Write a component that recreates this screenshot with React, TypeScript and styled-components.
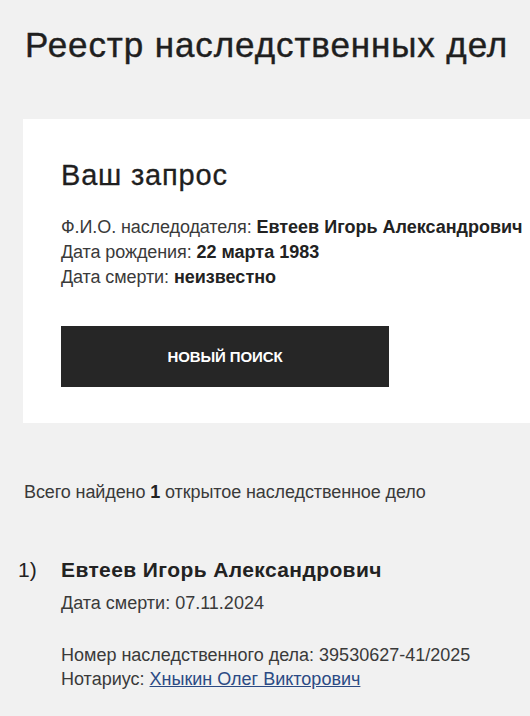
import React from "react";
import styled, { createGlobalStyle } from "styled-components";

const Global = createGlobalStyle`
  html, body {
    margin: 0;
    padding: 0;
    background: #f1f1f1;
    overflow: hidden;
  }
  body {
    font-family: "Liberation Sans", Arial, sans-serif;
    color: #222;
  }
`;

const Page = styled.div`
  width: 600px;
  padding: 23px 0 0 23px;
  box-sizing: border-box;
`;

const Title = styled.h1`
  margin: 0 0 0 2px;
  font-size: 35px;
  line-height: 44px;
  font-weight: 400;
  color: #1f1f1f;
  letter-spacing: 0.9px;
  -webkit-text-stroke: 0.4px #1f1f1f;
  white-space: nowrap;
`;

const Card = styled.section`
  margin-top: 52px;
  background: #fff;
  padding: 38px 38px 36px 38px;
  width: 560px;
  box-sizing: border-box;
`;

const CardTitle = styled.h2`
  margin: 0 0 22px 0;
  font-size: 29px;
  line-height: 36px;
  font-weight: 400;
  color: #1f1f1f;
  letter-spacing: 0.8px;
  -webkit-text-stroke: 0.3px #1f1f1f;
`;

const InfoLine = styled.div`
  font-size: 18px;
  line-height: 25px;
  color: #3a3a3a;
  white-space: nowrap;
  letter-spacing: -0.1px;
  b {
    font-weight: 700;
    color: #222;
    letter-spacing: 0;
  }
`;

const Button = styled.button`
  margin-top: 36px;
  width: 328px;
  height: 61px;
  background: #262626;
  border: none;
  color: #fff;
  font-family: "Liberation Sans", Arial, sans-serif;
  font-weight: 700;
  font-size: 15px;
  letter-spacing: -0.1px;
  cursor: pointer;
  display: block;
  padding: 0;
`;

const Summary = styled.p`
  margin: 58px 0 0 1px;
  font-size: 18px;
  line-height: 22px;
  color: #3a3a3a;
  white-space: nowrap;
  letter-spacing: -0.1px;
  b {
    color: #222;
  }
`;

const Case = styled.div`
  display: grid;
  grid-template-columns: 43px 1fr;
  margin: 54px 0 0 -5px;
`;

const Num = styled.div`
  font-size: 21px;
  line-height: 26px;
  color: #222;
`;

const CaseBody = styled.div`
  display: flex;
  flex-direction: column;
`;

const CaseName = styled.div`
  font-size: 21px;
  line-height: 26px;
  font-weight: 700;
  color: #222;
  letter-spacing: 0.4px;
  white-space: nowrap;
`;

const CaseLine = styled.div<{ $gap?: number }>`
  font-size: 18px;
  line-height: 24px;
  color: #3a3a3a;
  margin-top: ${(p) => p.$gap ?? 0}px;
  white-space: nowrap;
`;

const Link = styled.a`
  color: #2b4a84;
  text-decoration: underline;
`;

export default function App() {
  return (
    <>
      <Global />
      <Page>
        <Title>Реестр наследственных дел</Title>
        <Card>
          <CardTitle>Ваш запрос</CardTitle>
          <InfoLine>
            Ф.И.О. наследодателя: <b>Евтеев Игорь Александрович</b>
          </InfoLine>
          <InfoLine>
            Дата рождения: <b>22 марта 1983</b>
          </InfoLine>
          <InfoLine>
            Дата смерти: <b>неизвестно</b>
          </InfoLine>
          <Button>НОВЫЙ ПОИСК</Button>
        </Card>
        <Summary>
          Всего найдено <b>1</b> открытое наследственное дело
        </Summary>
        <Case>
          <Num>1)</Num>
          <CaseBody>
            <CaseName>Евтеев Игорь Александрович</CaseName>
            <CaseLine $gap={8}>Дата смерти: 07.11.2024</CaseLine>
            <CaseLine $gap={28}>Номер наследственного дела: 39530627-41/2025</CaseLine>
            <CaseLine>
              Нотариус: <Link href="#">Хныкин Олег Викторович</Link>
            </CaseLine>
          </CaseBody>
        </Case>
      </Page>
    </>
  );
}
